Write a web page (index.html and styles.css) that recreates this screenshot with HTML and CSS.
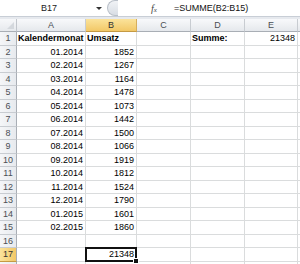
FILE: index.html
```html
<!DOCTYPE html>
<html>
<head>
<meta charset="utf-8">
<link rel="stylesheet" href="styles.css">
</head>
<body>
<div class="app">
  <div class="fbar">
    <div class="namebox"><span class="name">B17</span><span class="arrow"></span></div>
    <div class="finput">
      <div class="grip"></div>
      <div class="fx"><i>f</i><i class="x">x</i></div>
      <div class="formula">=SUMME(B2:B15)</div>
    </div>
  </div>
  <div class="gap"></div>
  <div class="sheet">
    <div class="corner"></div><div class="ch">A</div><div class="ch sel">B</div><div class="ch">C</div><div class="ch">D</div><div class="ch">E</div><div class="ch"></div>

    <div class="rh">1</div><div class="c b">Kalendermonat</div><div class="c b">Umsatz</div><div class="c"></div><div class="c b">Summe:</div><div class="c r">21348</div><div class="c"></div>
    <div class="rh">2</div><div class="c r">01.2014</div><div class="c r">1852</div><div class="c"></div><div class="c"></div><div class="c"></div><div class="c"></div>
    <div class="rh">3</div><div class="c r">02.2014</div><div class="c r">1267</div><div class="c"></div><div class="c"></div><div class="c"></div><div class="c"></div>
    <div class="rh">4</div><div class="c r">03.2014</div><div class="c r">1164</div><div class="c"></div><div class="c"></div><div class="c"></div><div class="c"></div>
    <div class="rh">5</div><div class="c r">04.2014</div><div class="c r">1478</div><div class="c"></div><div class="c"></div><div class="c"></div><div class="c"></div>
    <div class="rh">6</div><div class="c r">05.2014</div><div class="c r">1073</div><div class="c"></div><div class="c"></div><div class="c"></div><div class="c"></div>
    <div class="rh">7</div><div class="c r">06.2014</div><div class="c r">1442</div><div class="c"></div><div class="c"></div><div class="c"></div><div class="c"></div>
    <div class="rh">8</div><div class="c r">07.2014</div><div class="c r">1500</div><div class="c"></div><div class="c"></div><div class="c"></div><div class="c"></div>
    <div class="rh">9</div><div class="c r">08.2014</div><div class="c r">1066</div><div class="c"></div><div class="c"></div><div class="c"></div><div class="c"></div>
    <div class="rh">10</div><div class="c r">09.2014</div><div class="c r">1919</div><div class="c"></div><div class="c"></div><div class="c"></div><div class="c"></div>
    <div class="rh">11</div><div class="c r">10.2014</div><div class="c r">1812</div><div class="c"></div><div class="c"></div><div class="c"></div><div class="c"></div>
    <div class="rh">12</div><div class="c r">11.2014</div><div class="c r">1524</div><div class="c"></div><div class="c"></div><div class="c"></div><div class="c"></div>
    <div class="rh">13</div><div class="c r">12.2014</div><div class="c r">1790</div><div class="c"></div><div class="c"></div><div class="c"></div><div class="c"></div>
    <div class="rh">14</div><div class="c r">01.2015</div><div class="c r">1601</div><div class="c"></div><div class="c"></div><div class="c"></div><div class="c"></div>
    <div class="rh">15</div><div class="c r">02.2015</div><div class="c r">1860</div><div class="c"></div><div class="c"></div><div class="c"></div><div class="c"></div>
    <div class="rh">16</div><div class="c"></div><div class="c"></div><div class="c"></div><div class="c"></div><div class="c"></div><div class="c"></div>
    <div class="rh sel">17</div><div class="c"></div><div class="c r active">21348</div><div class="c"></div><div class="c"></div><div class="c"></div><div class="c"></div>
    <div class="rh"></div><div class="c"></div><div class="c"></div><div class="c"></div><div class="c"></div><div class="c"></div><div class="c"></div>
  </div>
</div>
</body>
</html>
```
FILE: styles.css
```css
html, body {
  margin: 0;
  padding: 0;
  background: #fff;
}
body {
  font-family: "Liberation Sans", Arial, sans-serif;
}
.app {
  width: 300px;
  height: 264px;
  overflow: hidden;
}
.fbar {
  display: flex;
  height: 16px;
  border-bottom: 1px solid #c8ced6;
  background: #fff;
}
.namebox {
  width: 107px;
  display: flex;
  align-items: center;
  font-size: 9px;
  color: #222;
}
.namebox .name {
  flex: 1;
  text-align: center;
  padding-left: 2px;
}
.arrow {
  width: 0;
  height: 0;
  border-left: 3px solid transparent;
  border-right: 3px solid transparent;
  border-top: 3px solid #333;
  margin-right: 5px;
}
.finput {
  flex: 1;
  display: flex;
  align-items: center;
}
.grip {
  width: 10px;
  height: 14px;
  border: 1px solid #b9c0c9;
  border-right: none;
  border-radius: 8px 0 0 8px;
  background: linear-gradient(#f1f3f6, #d8dde4);
}
.fx {
  margin-left: 33px;
  width: 13px;
  font-family: "Liberation Serif", serif;
  font-size: 10px;
  color: #444;
}
.fx .x {
  font-size: 7px;
}
.formula {
  margin-left: 10px;
  font-size: 9px;
  color: #111;
}
.gap {
  height: 2px;
  background: #e6e9ee;
}
.sheet {
  display: grid;
  grid-template-columns: 17px 69px 51px 54px 54px 53px 40px;
  grid-template-rows: 13px repeat(18, 13.5px);
  font-size: 9px;
}
.sheet > div {
  box-sizing: border-box;
  white-space: nowrap;
  overflow: visible;
}
.corner {
  background: linear-gradient(#f7f8fa, #e6e9ed);
  border-right: 1px solid #c2c6cc;
  border-bottom: 1px solid #a9aeb5;
  position: relative;
}
.corner::after {
  content: "";
  position: absolute;
  right: 2px;
  bottom: 2px;
  width: 0;
  height: 0;
  border-left: 7px solid transparent;
  border-bottom: 7px solid #d4d8dd;
}
.ch {
  background: linear-gradient(#f8f9fb, #e5e8ec);
  border-right: 1px solid #c8ccd1;
  border-bottom: 1px solid #a9aeb5;
  text-align: center;
  line-height: 12px;
  color: #4a4e54;
}
.ch.sel {
  background: linear-gradient(#fbe39b, #f2c867);
  border-right-color: #d6ae5c;
  border-bottom-color: #c59a43;
  color: #333;
}
.rh {
  background: linear-gradient(90deg, #f5f6f8, #e7eaee);
  border-right: 1px solid #a9aeb5;
  border-bottom: 1px solid #c8ccd1;
  text-align: center;
  line-height: 12.5px;
  color: #4a4e54;
}
.rh.sel {
  background: linear-gradient(90deg, #fbe39b, #f2c867);
  border-bottom-color: #c59a43;
  color: #333;
}
.c {
  border-right: 1px solid #dadcdd;
  border-bottom: 1px solid #dadcdd;
  line-height: 13px;
  padding: 0 2px 0 2px;
  color: #000;
}
.c.r {
  text-align: right;
}
.c.b {
  font-weight: bold;
  padding-left: 1px;
}
.c.active {
  position: relative;
}
.c.active::after {
  content: "";
  position: absolute;
  left: -1px;
  top: -1px;
  right: -1px;
  bottom: -1px;
  border: 2px solid #111;
}
.c.active::before {
  content: "";
  position: absolute;
  right: -3px;
  bottom: -3px;
  width: 4px;
  height: 4px;
  background: #111;
  border: 1px solid #fff;
  z-index: 2;
}
```
